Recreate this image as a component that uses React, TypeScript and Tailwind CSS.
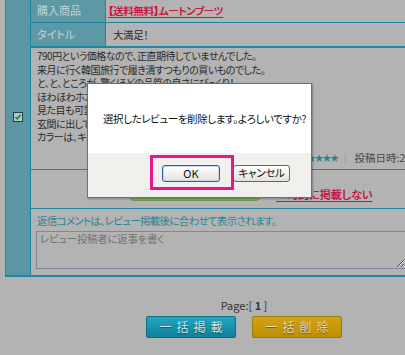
import React from 'react';

const reviewLines = [
  '790円という価格なので、正直期待していませんでした。',
  '来月に行く韓国旅行で履き潰すつもりの買いものでした。',
  'と、と、ところが、驚くほどの品質の良さにびっくり！',
  'ほわほわホカホカで、とっても暖かいです。',
  '見た目も可愛くて、友達にも褒められました。',
  '玄関に出しておくだけで気分が上がります。',
  'カラーは、キャメルにしましたが正解でした。',
];

function CheckBox() {
  return (
    <svg width="10" height="10" viewBox="0 0 10 10">
      <rect x="0.5" y="0.5" width="9" height="9" fill="#b9c6c8" stroke="#1d3f55" />
      <path d="M2.5 5 L4.2 6.8 L7.6 2.9" fill="none" stroke="#1f8a2a" strokeWidth="1.6" />
    </svg>
  );
}

export default function App() {
  return (
    <div className="relative w-[405px] h-[355px] overflow-hidden bg-[#b3b3b3] text-[11px] leading-[13.5px] text-[#2a2a2a] font-['Noto_Sans_CJK_JP',sans-serif] [font-feature-settings:'palt']">
      {/* review record */}
      <div className="ml-[5px] w-[478px] flex border-b-2 border-[#1d86a0]">
        <div className="w-[25px] shrink-0 bg-[#5a97a3] border-l border-[#3f8593] pt-[112px] flex justify-center">
          <div className="h-[10px]">
            <CheckBox />
          </div>
        </div>
        <div className="flex-1 flex flex-col border-l border-[#1d86a0]">
          <div className="flex h-[23px] border-b border-[#1d86a0]">
            <div className="w-[75px] shrink-0 bg-[#5d99a5] border-r border-[#1d86a0] flex items-center pl-[6px] text-[#c3d2d5]">
              購入商品
            </div>
            <div className="flex items-center pl-[2px]">
              <span className="text-[#c8143e] text-[10.5px] tracking-[-0.3px] underline underline-offset-2 [text-shadow:0.3px_0_0_#c8143e]">
                【送料無料】ムートンブーツ
              </span>
            </div>
          </div>
          <div className="flex h-[25px] border-b-2 border-[#1d86a0]">
            <div className="w-[75px] shrink-0 bg-[#5d99a5] border-r border-[#1d86a0] flex items-center pl-[6px] text-[#c3d2d5]">
              タイトル
            </div>
            <div className="flex items-center pl-[7px] text-[10.5px] tracking-[-0.4px]">大満足！</div>
          </div>
          <div className="h-[122px] flex flex-col border-b border-[#1d86a0] pl-[6px] pt-[1px] text-[10px] tracking-[-0.5px]">
            {reviewLines.map((line) => (
              <p key={line} className="whitespace-nowrap">
                {line}
              </p>
            ))}
            <div className="mt-auto mb-[5px] flex items-center pl-[243px] whitespace-nowrap tracking-normal">
              <span className="text-[#2b8598] text-[9px] tracking-[-1.2px]">評価：★★★★★</span>
              <span className="ml-[6px] mr-[8px] text-[#8f9a9c]">|</span>
              <span className="text-[#4a4a4a] text-[10.5px]">投稿日時:2011/12/03</span>
            </div>
          </div>
          <div className="h-[39px] flex items-end gap-[16px] pl-[99px] pb-[7px] border-b border-[#1d86a0]">
            <button className="w-[130px] h-[24px] rounded-[4px] border border-[#6d9a52] bg-gradient-to-b from-[#a6cc86] to-[#7fae5c]" />
            <span className="text-[#c8143e] text-[11px] underline underline-offset-2 whitespace-nowrap [text-shadow:0.4px_0_0_#c8143e]">
              一時的に掲載しない
            </span>
          </div>
          <div className="flex flex-col pl-[6px] pt-[5px] pb-[6px]">
            <p className="text-[#2b8598] text-[10.5px] tracking-[-0.7px] whitespace-nowrap">
              返信コメントは、レビュー掲載後に合わせて表示されます。
            </p>
            <textarea
              className="mt-[3px] -ml-[1px] w-[370px] h-[38px] border border-[#7c8a9c] bg-[#b3b3b3] px-[3px] py-0 text-[10.5px] leading-[13.5px] tracking-[-0.3px] placeholder:text-[#737373] outline-none"
              placeholder="レビュー投稿者に返事を書く"
            />
          </div>
        </div>
      </div>

      {/* pager and bulk actions */}
      <div className="ml-[5px] w-[478px] flex flex-col items-center">
        <p className="mt-[22px] text-[#333]">
          Page:[ <span className="font-bold">1</span> ]
        </p>
        <div className="mt-[4px] flex gap-[16px]">
          <button className="w-[90px] h-[22px] pl-[5px] rounded-[2px] border border-[#0d6d86] bg-gradient-to-b from-[#22a6c2] to-[#10819b] text-[12px] text-[#d6e6ea] whitespace-nowrap tracking-[5px] [text-shadow:0_1px_1px_rgba(0,0,0,0.45)]">
            一括掲載
          </button>
          <button className="w-[90px] h-[22px] pl-[5px] rounded-[2px] border border-[#9e7a04] bg-gradient-to-b from-[#d2a312] to-[#bd8f04] text-[12px] text-[#e2dcc8] whitespace-nowrap tracking-[5px] [text-shadow:0_1px_1px_rgba(0,0,0,0.45)]">
            一括削除
          </button>
        </div>
      </div>

      {/* confirm dialog */}
      <div className="absolute left-[87px] top-[83px] w-[225px] h-[115px] flex flex-col border border-[#707070] bg-white shadow-[1px_1px_2px_rgba(0,0,0,0.3)]">
        <div className="h-[69px] flex items-center pl-[15px] text-[10.5px] tracking-[-0.4px] text-[#111] whitespace-nowrap">
          選択したレビューを削除します。よろしいですか?
        </div>
        <div className="flex-1 flex items-center justify-end gap-[13px] pr-[21px] pb-[4px] bg-[#f1f0ec]">
          <button className="w-[58px] h-[17px] rounded-[3px] border border-[#2d5da6] bg-gradient-to-b from-white to-[#e4e2d9] text-[11px] leading-none text-[#111] shadow-[inset_0_0_0_1px_#c7d8f2]">
            OK
          </button>
          <button className="w-[57px] h-[17px] rounded-[3px] border border-[#4b6994] bg-gradient-to-b from-white to-[#e4e2d9] text-[10.5px] tracking-[-0.3px] leading-none text-[#111]">
            キャンセル
          </button>
        </div>
      </div>

      {/* highlight */}
      <div className="absolute left-[150px] top-[155px] w-[84px] h-[35px] border-[3px] border-[#e5178b]" />
    </div>
  );
}
